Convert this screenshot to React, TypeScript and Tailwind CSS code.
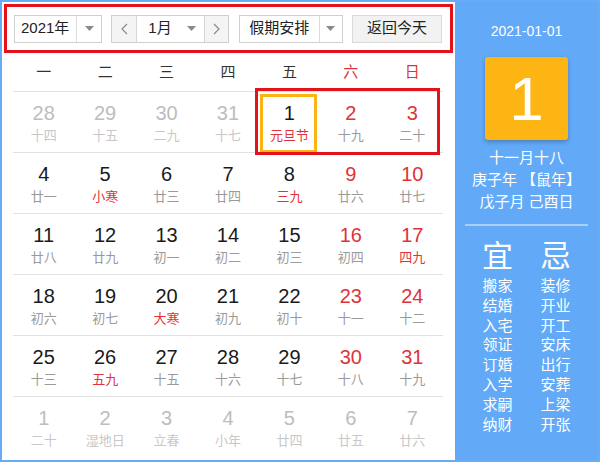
import React from 'react';

type Day = {
  n: number;
  lunar: string;
  other?: boolean;
  festival?: boolean;
};

const weeks: Day[][] = [
  [
    { n: 28, lunar: '十四', other: true },
    { n: 29, lunar: '十五', other: true },
    { n: 30, lunar: '二九', other: true },
    { n: 31, lunar: '十七', other: true },
    { n: 1, lunar: '元旦节', festival: true },
    { n: 2, lunar: '十九' },
    { n: 3, lunar: '二十' },
  ],
  [
    { n: 4, lunar: '廿一' },
    { n: 5, lunar: '小寒', festival: true },
    { n: 6, lunar: '廿三' },
    { n: 7, lunar: '廿四' },
    { n: 8, lunar: '三九', festival: true },
    { n: 9, lunar: '廿六' },
    { n: 10, lunar: '廿七' },
  ],
  [
    { n: 11, lunar: '廿八' },
    { n: 12, lunar: '廿九' },
    { n: 13, lunar: '初一' },
    { n: 14, lunar: '初二' },
    { n: 15, lunar: '初三' },
    { n: 16, lunar: '初四' },
    { n: 17, lunar: '四九', festival: true },
  ],
  [
    { n: 18, lunar: '初六' },
    { n: 19, lunar: '初七' },
    { n: 20, lunar: '大寒', festival: true },
    { n: 21, lunar: '初九' },
    { n: 22, lunar: '初十' },
    { n: 23, lunar: '十一' },
    { n: 24, lunar: '十二' },
  ],
  [
    { n: 25, lunar: '十三' },
    { n: 26, lunar: '五九', festival: true },
    { n: 27, lunar: '十五' },
    { n: 28, lunar: '十六' },
    { n: 29, lunar: '十七' },
    { n: 30, lunar: '十八' },
    { n: 31, lunar: '十九' },
  ],
  [
    { n: 1, lunar: '二十', other: true },
    { n: 2, lunar: '湿地日', other: true },
    { n: 3, lunar: '立春', other: true },
    { n: 4, lunar: '小年', other: true },
    { n: 5, lunar: '廿四', other: true },
    { n: 6, lunar: '廿五', other: true },
    { n: 7, lunar: '廿六', other: true },
  ],
];

const weekdays = ['一', '二', '三', '四', '五', '六', '日'];
const yi = ['搬家', '结婚', '入宅', '领证', '订婚', '入学', '求嗣', '纳财'];
const ji = ['装修', '开业', '开工', '安床', '出行', '安葬', '上梁', '开张'];

const Caret = () => (
  <svg width="9" height="5" viewBox="0 0 9 5" className="fill-[#8a8a8a]">
    <path d="M0 0h9L4.5 5z" />
  </svg>
);

const Toolbar = () => (
  <div className="mx-[2px] mt-[2px] h-[49px] border-[3px] border-[#e3121b] flex items-center justify-between pl-[7px] pr-[8px]">
    <div className="flex h-[28px] w-[88px] border border-[#cfcfcf] bg-white">
      <span className="flex-1 flex items-center pl-[6px] text-[15px] text-[#222]">2021年</span>
      <span className="w-[25px] border-l border-[#dcdcdc] flex items-center justify-center">
        <Caret />
      </span>
    </div>
    <div className="flex h-[28px] w-[118px] border border-[#cfcfcf] bg-white">
      <span className="w-[25px] bg-[#f4f4f4] border-r border-[#d6d6d6] flex items-center justify-center">
        <svg width="7" height="12" viewBox="0 0 7 12" fill="none" stroke="#8a8a8a" strokeWidth="1.2">
          <path d="M6 1L1 6l5 5" />
        </svg>
      </span>
      <span className="flex-1 flex items-center justify-between pl-[11px] pr-[8px] text-[15px] text-[#222]">
        1月
        <Caret />
      </span>
      <span className="w-[24px] bg-[#f4f4f4] border-l border-[#d6d6d6] flex items-center justify-center">
        <svg width="7" height="12" viewBox="0 0 7 12" fill="none" stroke="#8a8a8a" strokeWidth="1.2">
          <path d="M1 1l5 5-5 5" />
        </svg>
      </span>
    </div>
    <div className="flex h-[28px] w-[104px] border border-[#cfcfcf] bg-white">
      <span className="flex-1 flex items-center justify-center text-[15px] text-[#222]">假期安排</span>
      <span className="w-[23px] border-l border-[#dcdcdc] flex items-center justify-center">
        <Caret />
      </span>
    </div>
    <button className="h-[28px] w-[90px] border border-[#dadada] bg-[#f2f2f2] text-[15px] text-[#222] flex items-center justify-center">
      返回今天
    </button>
  </div>
);

const Cell = ({ d, col }: { d: Day; col: number }) => {
  const weekend = col >= 5;
  const numColor = d.other ? 'text-[#bdbdbd]' : weekend ? 'text-[#e0323a]' : 'text-[#1a1a1a]';
  const lunarColor = d.other
    ? 'text-[#c8c8c8]'
    : d.festival
      ? 'text-[#e0323a]'
      : 'text-[#9a9a9a]';
  const selected = !d.other && d.n === 1;
  return (
    <div className="relative flex flex-col items-center pt-[8px]">
      {selected && (
        <div className="absolute left-[1px] right-[3px] top-[2px] bottom-[-1px] border-[3px] border-[#fbb412]" />
      )}
      <span className={`text-[20px] leading-[26px] ${numColor}`}>{d.n}</span>
      <span className={`text-[13px] leading-[20px] ${lunarColor}`}>{d.lunar}</span>
    </div>
  );
};

const SidePanel = () => (
  <div className="flex-1 bg-[#62a9f7] flex flex-col items-center text-white">
    <div className="mt-[19px] text-[14px] leading-[20px]">2021-01-01</div>
    <div className="mt-[16px] w-[83px] h-[83px] rounded-[3px] bg-[#fdb514] shadow-[0_2px_4px_rgba(0,0,0,0.25)] flex items-center justify-center text-[62px] leading-none">
      1
    </div>
    <div className="mt-[7px] flex flex-col items-center text-[15px] leading-[22px]">
      <span>十一月十八</span>
      <span>庚子年 【鼠年】</span>
      <span>戊子月 己酉日</span>
    </div>
    <div className="mt-[11px] h-[2px] w-[123px] bg-[#a9d0fb]" />
    <div className="mt-[13px] flex gap-[28px]">
      {[
        { head: '宜', items: yi },
        { head: '忌', items: ji },
      ].map((c) => (
        <div key={c.head} className="flex flex-col items-center w-[30px]">
          <span className="text-[31px] leading-[36px] mb-[1px]">{c.head}</span>
          {c.items.map((t) => (
            <span key={t} className="text-[15px] leading-[19.8px]">
              {t}
            </span>
          ))}
        </div>
      ))}
    </div>
  </div>
);

export default function App() {
  return (
    <div className="w-[600px] h-[462px] bg-white border-2 border-[#68acf6] flex font-['Liberation_Sans','Noto_Sans_CJK_SC',sans-serif] overflow-hidden">
      <div className="w-[453px] flex flex-col">
        <Toolbar />
        <div className="pl-[11px] pr-[12px]">
          <div className="grid grid-cols-7 h-[38px] items-center text-[15px]">
            {weekdays.map((w, i) => (
              <span key={w} className={`text-center ${i >= 5 ? 'text-[#e0323a]' : 'text-[#333]'}`}>
                {w}
              </span>
            ))}
          </div>
          <div className="relative">
            {weeks.map((week, r) => (
              <div key={r} className="grid grid-cols-7 h-[61px] border-t border-[#e2e2e2]">
                {week.map((d, c) => (
                  <Cell key={c} d={d} col={c} />
                ))}
              </div>
            ))}
            <div className="absolute left-[242px] top-[-3px] w-[185px] h-[67px] border-[3px] border-[#e3121b] pointer-events-none" />
          </div>
        </div>
      </div>
      <SidePanel />
    </div>
  );
}
